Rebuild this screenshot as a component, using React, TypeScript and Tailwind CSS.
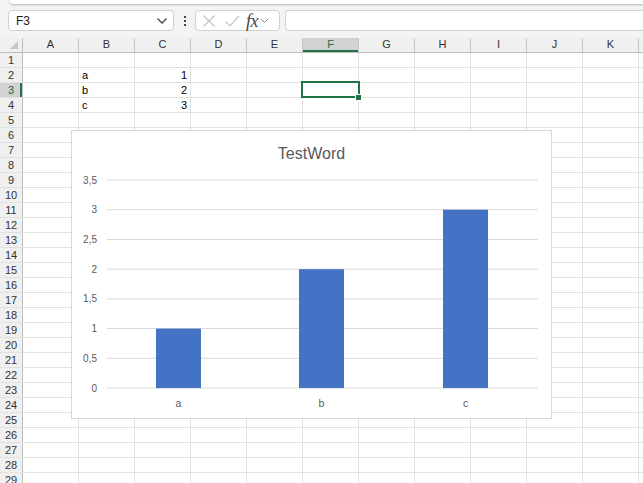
import React from "react";

const COLS = ["A", "B", "C", "D", "E", "F", "G", "H", "I", "J", "K", ""];
const ROWS = Array.from({ length: 29 }, (_, i) => i + 1);

const cellData: Record<string, { v: string; right?: boolean }> = {
  B2: { v: "a" },
  B3: { v: "b" },
  B4: { v: "c" },
  C2: { v: "1", right: true },
  C3: { v: "2", right: true },
  C4: { v: "3", right: true },
};

function Chart() {
  const yLabels = ["3,5", "3", "2,5", "2", "1,5", "1", "0,5", "0"];
  const top = 49;
  const step = 29.72;
  const zeroY = top + step * 7;
  const bars = [
    { label: "a", v: 1, x: 84 },
    { label: "b", v: 2, x: 227 },
    { label: "c", v: 3, x: 371 },
  ];
  return (
    <div className="absolute left-[71px] top-[130px] w-[481px] h-[289px] bg-white border border-[#d9d9d9]">
      <div className="absolute left-0 right-0 top-[13px] text-center text-[16px] leading-[20px] text-[#595959] font-['Liberation_Sans',sans-serif]">
        TestWord
      </div>
      <svg width="481" height="289" className="block">
        {yLabels.map((l, i) => (
          <g key={l}>
            <line x1={35} x2={466} y1={top + i * step} y2={top + i * step} stroke="#d9d9d9" strokeWidth={1} />
            <text
              x={25}
              y={top + i * step + 3.5}
              textAnchor="end"
              fontSize="10"
              fill="#595959"
              fontFamily="'Liberation Sans', sans-serif"
            >
              {l}
            </text>
          </g>
        ))}
        {bars.map((b) => (
          <g key={b.label}>
            <rect x={b.x} y={zeroY - b.v * step * 2} width={45} height={b.v * step * 2} fill="#4472c4" />
            <text
              x={b.x + 22.5}
              y={276}
              textAnchor="middle"
              fontSize="10.5"
              fill="#595959"
              fontFamily="'Liberation Sans', sans-serif"
            >
              {b.label}
            </text>
          </g>
        ))}
      </svg>
    </div>
  );
}

function FormulaBar() {
  return (
    <div className="h-[38px] bg-[#f3f3f3] flex flex-col shrink-0">
      <div className="h-[4px] ml-[10px] bg-white rounded-bl-[6px] shadow-[0_1px_2px_rgba(0,0,0,0.25)]" />
      <div className="mt-[6px] h-[21px] flex items-stretch pl-[8px]">
        <div className="w-[166px] bg-white border border-[#d1d1d1] rounded-[4px] flex items-center justify-between pl-[7px] pr-[5px]">
          <span className="text-[12px] text-[#222]">F3</span>
          <svg width="12" height="8" viewBox="0 0 12 8">
            <path d="M1.5 1.5 L6 6 L10.5 1.5" fill="none" stroke="#444" strokeWidth="1.3" />
          </svg>
        </div>
        <div className="w-[21px] flex flex-col items-center justify-center gap-[2px]">
          <div className="w-[2px] h-[2px] bg-[#444]" />
          <div className="w-[2px] h-[2px] bg-[#444]" />
          <div className="w-[2px] h-[2px] bg-[#444]" />
        </div>
        <div className="w-[85px] bg-white border border-[#d1d1d1] rounded-[4px] flex items-center pl-[5px] pr-[3px]">
          <svg width="14" height="14" viewBox="0 0 14 14" className="ml-[1px]">
            <path d="M1.5 1.5 L12.5 12.5 M12.5 1.5 L1.5 12.5" stroke="#c4c4c4" strokeWidth="1.2" />
          </svg>
          <svg width="16" height="14" viewBox="0 0 16 14" className="ml-[8px]">
            <path d="M1.5 7.5 L6 12 L15 2" fill="none" stroke="#c4c4c4" strokeWidth="1.2" />
          </svg>
          <span className="ml-[6px] text-[18px] leading-none italic text-[#444] font-['Liberation_Serif',serif] tracking-[-0.5px]">
            fx
          </span>
          <svg width="9" height="6" viewBox="0 0 9 6" className="ml-[2px]">
            <path d="M1 1 L4.5 4.5 L8 1" fill="none" stroke="#888" strokeWidth="1" />
          </svg>
        </div>
        <div className="ml-[5px] flex-1 bg-white border border-[#d1d1d1] border-r-0 rounded-l-[4px]" />
      </div>
    </div>
  );
}

export default function App() {
  return (
    <div className="relative w-[643px] h-[483px] overflow-hidden bg-white font-['Liberation_Sans',Arial,sans-serif]">
      <FormulaBar />
      <div className="flex flex-col">
        <div className="flex h-[15px] bg-[#f0f0f0] border-b border-[#bdbdbd]">
          <div className="w-[23px] shrink-0 border-r border-[#bdbdbd] relative">
            <svg width="10" height="10" viewBox="0 0 10 10" className="absolute right-[3px] bottom-[2px]">
              <path d="M9 1 L9 9 L1 9 Z" fill="#c8c8c8" />
            </svg>
          </div>
          {COLS.map((c, i) => (
            <div
              key={i}
              className={
                c === "F"
                  ? "w-[56px] shrink-0 border-r border-[#c6c6c6] bg-[#d2d2d2] text-[#1e6b40] text-[11px] leading-[13px] text-center shadow-[inset_0_-2px_0_#217346]"
                  : "w-[56px] shrink-0 border-r border-[#c6c6c6] text-[#333] text-[11px] leading-[13px] text-center"
              }
            >
              {c}
            </div>
          ))}
        </div>
        {ROWS.map((r) => (
          <div key={r} className="flex h-[15px] border-b border-[#e1e1e1]">
            <div
              className={
                r === 3
                  ? "w-[23px] shrink-0 bg-[#d2d2d2] text-[#1e6b40] text-[11px] leading-[14px] text-center border-r border-[#bdbdbd] shadow-[inset_-2px_0_0_#217346]"
                  : "w-[23px] shrink-0 bg-[#f0f0f0] text-[#333] text-[11px] leading-[14px] text-center border-r border-[#bdbdbd]"
              }
            >
              {r}
            </div>
            {COLS.map((c, i) => {
              const d = cellData[`${c}${r}`];
              return (
                <div
                  key={i}
                  className={
                    d && d.right
                      ? "w-[56px] shrink-0 border-r border-[#e1e1e1] text-[11px] leading-[14px] text-black text-right pr-[3px]"
                      : "w-[56px] shrink-0 border-r border-[#e1e1e1] text-[11px] leading-[14px] text-black pl-[3px]"
                  }
                >
                  {d ? d.v : ""}
                </div>
              );
            })}
          </div>
        ))}
      </div>
      <div className="absolute left-[301px] top-[81px] w-[59px] h-[17px] border-2 border-[#217346]" />
      <div className="absolute left-[355px] top-[94px] w-[7px] h-[7px] bg-[#217346] border border-white" />
      <Chart />
    </div>
  );
}
